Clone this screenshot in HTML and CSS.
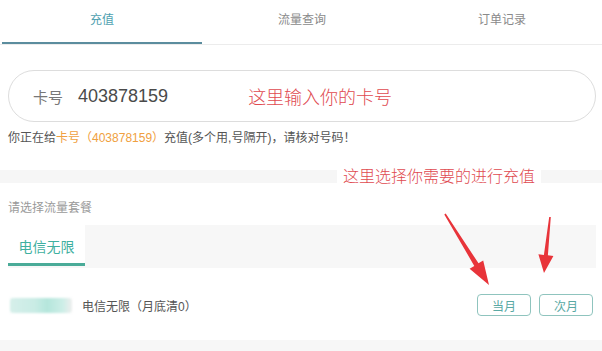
FILE: index.html
```html
<!DOCTYPE html>
<html lang="zh-CN">
<head>
<meta charset="UTF-8">
<meta name="viewport" content="width=device-width, initial-scale=1.0">
<title>充值</title>
<link rel="stylesheet" href="styles.css">
</head>
<body>

<div class="page">
    <div class="tabs">
        <div class="tab active">充值</div>
        <div class="tab">流量查询</div>
        <div class="tab">订单记录</div>
    </div>

    <div class="card-input">
        <span class="card-label">卡号</span>
        <span class="card-number">403878159</span>
        <span class="tip">这里输入你的卡号</span>
    </div>
    <p class="confirm">你正在给<span class="hl">卡号（403878159）</span>充值(多个用,号隔开)，请核对号码！</p>

    <div class="divider">
        <span class="tip tip-band">这里选择你需要的进行充值</span>
    </div>

    <p class="pk-title">请选择流量套餐</p>
    <div class="subtabs">
        <div class="subtab active">电信无限</div>
    </div>

    <div class="pk-row">
        <div class="thumb"></div>
        <span class="pk-name">电信无限（月底清0）</span>
        <div class="pk-btns">
            <button class="pk-btn">当月</button>
            <button class="pk-btn">次月</button>
        </div>
    </div>

    <div class="footer-band"></div>

    <!-- 标注箭头 -->
    <svg class="arrows" width="602" height="351" viewBox="0 0 602 351">
        <polygon fill="#e8343a" points="444.3,214.4 474.3,265.9 469.6,268.8 489,285 483.2,260.4 478.5,263.3 445.7,213.6"/>
        <polygon fill="#e8343a" points="549.2,216.9 543.9,254.9 538.4,254.3 544,273 553.4,255.9 547.9,255.3 550.8,217.1"/>
    </svg>
</div>

</body>
</html>
```

FILE: styles.css
```css
body {
    margin: 0;
    padding: 0;
    background: #ffffff;
    font-family: "Liberation Sans", "Noto Sans CJK SC", sans-serif;
    color: #555555;
}

.page {
    position: relative;
    width: 602px;
    height: 351px;
    overflow: hidden;
}

/* 顶部标签 */
.tabs {
    display: flex;
    height: 44px;
    border-bottom: 1px solid #ececec;
}

.tab {
    flex: 1;
    text-align: center;
    line-height: 40px;
    font-size: 12px;
    color: #8a8a8a;
}

.tab.active {
    color: #4f9fb0;
    margin-left: 2px;
    box-shadow: inset 0 -2px 0 #5b8d9e;
}

/* 卡号输入框 */
.card-input {
    display: flex;
    align-items: center;
    height: 50px;
    margin: 25px 6px 0 8px;
    padding-left: 24px;
    border: 1px solid #dddddd;
    border-radius: 26px;
}

.card-label {
    font-size: 15px;
    color: #777777;
}

.card-number {
    margin-left: 15px;
    font-size: 18px;
    color: #4a4a4a;
}

.tip {
    color: #e04a50;
    font-size: 18px;
    font-weight: 300;
}

.card-input .tip {
    margin-left: 80px;
}

.confirm {
    margin: 8px 0 0 8px;
    font-size: 12px;
    line-height: 16px;
    color: #555555;
}

.hl {
    color: #f0a040;
}

/* 灰色分隔带 */
.divider {
    display: flex;
    align-items: center;
    height: 13px;
    margin-top: 24px;
    background: #f6f6f6;
}

.tip-band {
    margin-left: 337px;
    padding: 0 6px;
    font-size: 16px;
    line-height: 22px;
    background: #ffffff;
}

/* 套餐 */
.pk-title {
    margin: 17px 0 0 8px;
    font-size: 12px;
    line-height: 16px;
    color: #9a9a9a;
}

.subtabs {
    display: flex;
    height: 43px;
    margin: 9px 6px 0 8px;
    background: #f7f7f7;
}

.subtab {
    width: 77px;
    text-align: center;
    font-size: 14px;
    line-height: 44px;
    color: #3fb0a0;
}

.subtab.active {
    background: #ffffff;
    box-shadow: inset 0 -3px 0 #4aab98;
    height: 41px;
}

.pk-row {
    display: flex;
    align-items: center;
    height: 22px;
    margin: 26px 9px 0 10px;
}

.thumb {
    width: 62px;
    height: 15px;
    border-radius: 3px;
    background: linear-gradient(90deg, #d6efea 0%, #c9ece5 40%, #b5e6dc 60%, #cdeee7 85%, #eeeeee 100%);
    filter: blur(1px);
}

.pk-name {
    margin-left: 10px;
    font-size: 12px;
    color: #555555;
}

.pk-btns {
    display: flex;
    gap: 8px;
    margin-left: auto;
}

.pk-btn {
    width: 54px;
    height: 22px;
    padding: 0;
    border: 1px solid #8fc4be;
    border-radius: 4px;
    background: #ffffff;
    color: #5aa9a4;
    font-family: "Liberation Sans", "Noto Sans CJK SC", sans-serif;
    font-size: 12px;
}

.footer-band {
    height: 12px;
    margin-top: 24px;
    background: #f7f7f7;
}

.arrows {
    position: absolute;
    top: 0;
    left: 0;
    pointer-events: none;
}
```
